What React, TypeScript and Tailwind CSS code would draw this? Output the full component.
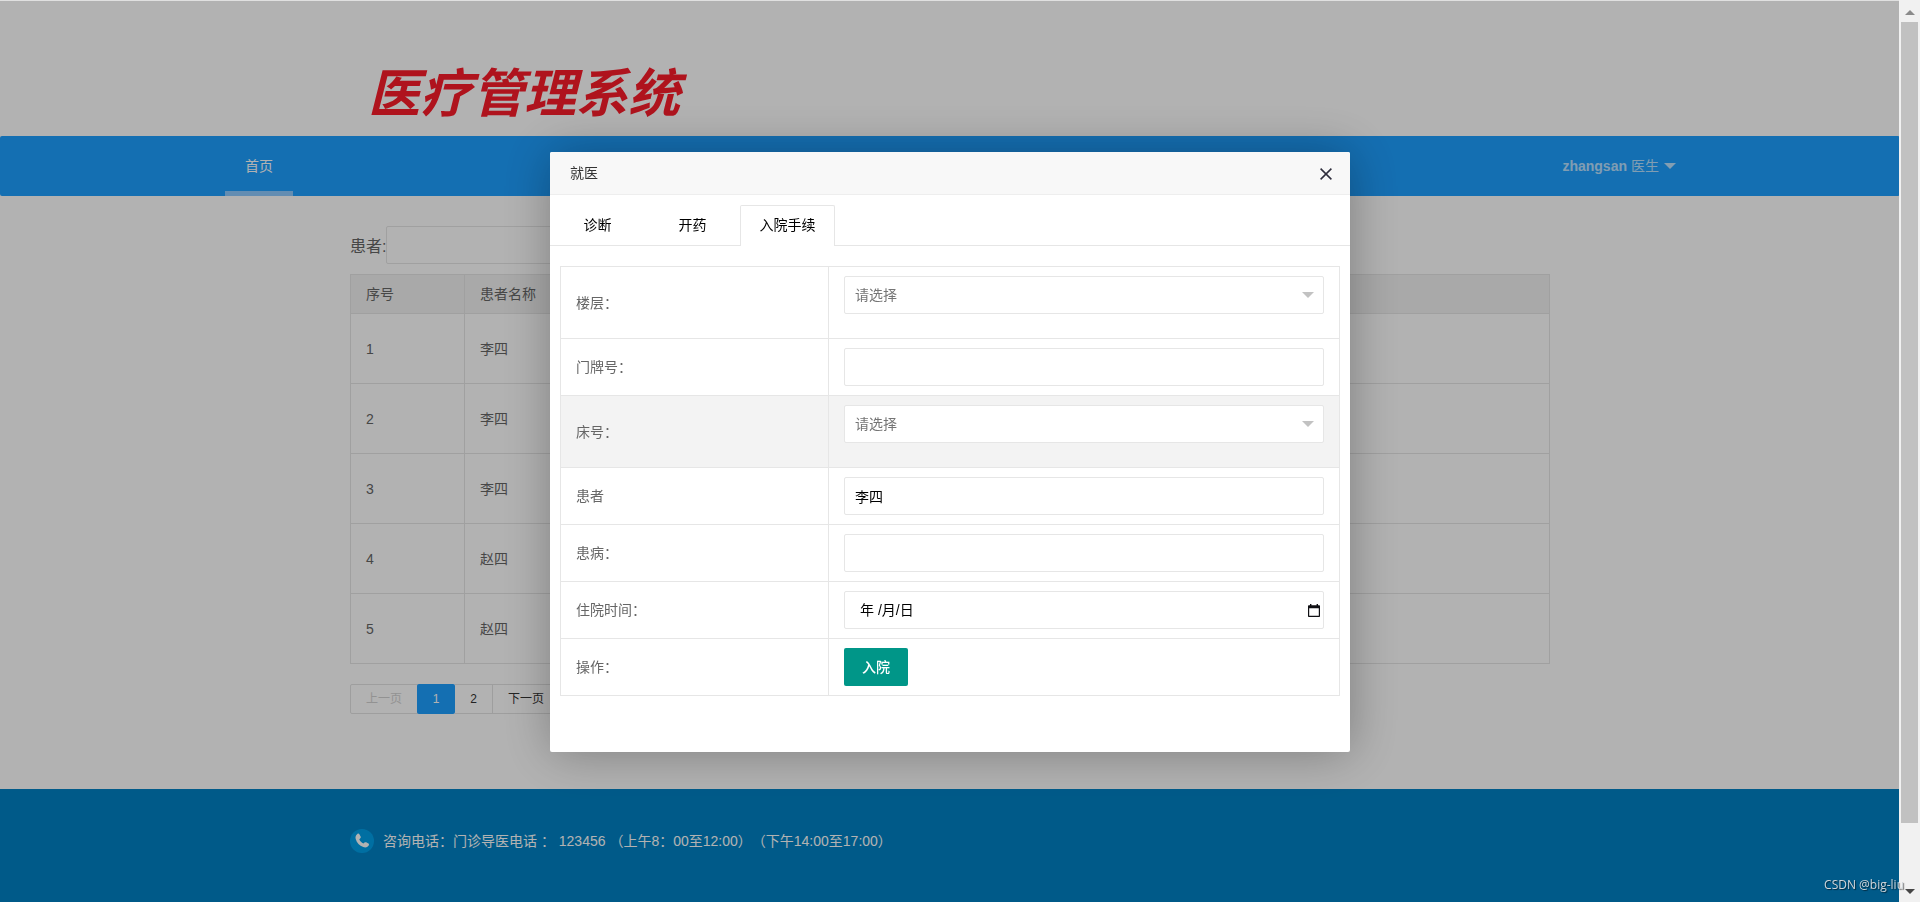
import { useState } from "react";
import type { ReactNode } from "react";

const patients = ["李四", "李四", "李四", "赵四", "赵四"];
const tabs = ["诊断", "开药", "入院手续"];

const fieldClass =
  "block h-[38px] w-full rounded-xs border border-[#e6e6e6] bg-white px-2.5 text-sm outline-none";

function SelectField({ id }: { id: string }) {
  return (
    <div className="relative mb-[15px]">
      <select id={id} className={`${fieldClass} appearance-none text-[#757575]`}>
        <option>请选择</option>
      </select>
      <span className="pointer-events-none absolute top-4 right-2.5 border-x-[6px] border-t-[6px] border-x-transparent border-t-[#c2c2c2]" />
    </div>
  );
}

function FormRow({
  label,
  htmlFor,
  active,
  children,
}: {
  label: string;
  htmlFor: string;
  active?: boolean;
  children: ReactNode;
}) {
  return (
    <tr className={active ? "bg-[#f3f3f3]" : "bg-white"}>
      <th scope="row" className="border border-[#e6e6e6] px-[15px] py-[9px] text-left font-normal">
        <label htmlFor={htmlFor}>{label}</label>
      </th>
      <td className="border border-[#e6e6e6] px-[15px] py-[9px]">{children}</td>
    </tr>
  );
}

function Dialog() {
  const [tab, setTab] = useState(2);
  return (
    <div
      role="dialog"
      aria-labelledby="dialog-title"
      className="min-h-[600px] w-[800px] rounded-xs bg-white shadow-[1px_1px_50px_rgba(0,0,0,0.3)]"
    >
      <div className="flex h-[43px] items-center justify-between rounded-t-xs border-b border-[#eeeeee] bg-[#f8f8f8] pr-[18px] pl-5">
        <h2 id="dialog-title" className="text-sm text-[#333333]">
          就医
        </h2>
        <button type="button" aria-label="关闭" className="pt-0.5">
          <svg viewBox="0 0 12 12" className="size-3" fill="none" stroke="#2e2d3c" strokeWidth="1.5">
            <path d="M0.6 0.6 11.4 11.4M11.4 0.6 0.6 11.4" />
          </svg>
        </button>
      </div>
      <div className="flex h-[51px] border-b border-[#e6e6e6] pt-2.5">
        {tabs.map((name, i) => (
          <button
            key={name}
            type="button"
            onClick={() => setTab(i)}
            className={
              i === tab
                ? "h-[41px] w-[95px] rounded-t-xs border border-b-0 border-[#e6e6e6] bg-white pb-0.5 text-sm text-black"
                : "h-10 w-[95px] text-sm text-black"
            }
          >
            {name}
          </button>
        ))}
      </div>
      <form className="px-2.5 pt-5" onSubmit={(e) => e.preventDefault()}>
        <table className="w-full table-fixed border-collapse text-sm text-[#666666]">
          <colgroup>
            <col className="w-[268px]" />
            <col />
          </colgroup>
          <tbody>
            <FormRow label="楼层：" htmlFor="floor">
              <SelectField id="floor" />
            </FormRow>
            <FormRow label="门牌号：" htmlFor="room">
              <input id="room" type="text" className={`${fieldClass} text-black`} />
            </FormRow>
            <FormRow label="床号：" htmlFor="bed" active>
              <SelectField id="bed" />
            </FormRow>
            <FormRow label="患者" htmlFor="patient">
              <input id="patient" type="text" defaultValue="李四" className={`${fieldClass} text-black`} />
            </FormRow>
            <FormRow label="患病：" htmlFor="illness">
              <input id="illness" type="text" className={`${fieldClass} text-black`} />
            </FormRow>
            <FormRow label="住院时间：" htmlFor="date">
              <div className="flex h-[38px] items-center rounded-xs border border-[#e6e6e6] bg-white pr-[3px] pl-[15px]">
                <input
                  id="date"
                  type="text"
                  placeholder="年 /月/日"
                  className="min-w-0 flex-1 text-sm text-black outline-none placeholder:text-black"
                />
                <button type="button" aria-label="选择日期">
                  <svg viewBox="0 0 12 13" className="h-[13px] w-3">
                    <path
                      fill="#101014"
                      fillRule="evenodd"
                      d="M2 0h1.4v1.2h5.2V0H10v1.2h1.2a.8.8 0 0 1 .8.8v10.2a.8.8 0 0 1-.8.8H.8a.8.8 0 0 1-.8-.8V2a.8.8 0 0 1 .8-.8H2zM1.2 4.2v7.6h9.6V4.2z"
                    />
                  </svg>
                </button>
              </div>
            </FormRow>
            <FormRow label="操作：" htmlFor="submit">
              <button
                id="submit"
                type="submit"
                className="block h-[38px] rounded-xs bg-[#009688] px-[18px] text-sm font-medium text-white"
              >
                入院
              </button>
            </FormRow>
          </tbody>
        </table>
      </form>
    </div>
  );
}

export default function App() {
  return (
    <div className='flex min-h-screen bg-white pr-5 font-["Liberation_Sans","Noto_Sans_CJK_SC",sans-serif] text-sm text-[#666666]'>
      <div className="flex min-w-0 flex-1 flex-col border-t border-[#e0e0e0]">
        <header className="mx-auto flex h-[135px] w-[1200px] items-end pb-[15px] pl-[18px]">
          <h1 className="text-[52px] leading-[54px] font-bold text-[#fb1c2a] italic">医疗管理系统</h1>
        </header>

        <nav className="flex h-[60px] items-stretch justify-between rounded-xs bg-[#1e9fff] pr-[224px] pl-[225px]">
          <a href="#home" className="flex items-center border-b-[5px] border-[#8ecaff] px-5 pt-[5px] text-white">
            首页
          </a>
          <a href="#account" className="flex items-center gap-1 text-white/70">
            <b>zhangsan</b>
            <span>医生</span>
            <span className="ml-px border-x-[6px] border-t-[6px] border-x-transparent border-t-white/70" />
          </a>
        </nav>

        <main className="mx-auto w-[1200px] pt-[30px]">
          <div className="flex items-center">
            <label htmlFor="search" className="w-9 pt-1 text-base whitespace-nowrap">
              患者:
            </label>
            <input id="search" type="text" className="h-[38px] w-[300px] rounded-xs border border-[#e6e6e6] px-2.5" />
          </div>
          <table className="mt-2.5 w-full table-fixed border-collapse">
            <colgroup>
              <col className="w-[114px]" />
              <col />
            </colgroup>
            <thead>
              <tr className="h-[39px] bg-[#f2f2f2]">
                <th className="border border-[#e6e6e6] px-[15px] text-left font-normal">序号</th>
                <th className="border border-[#e6e6e6] px-[15px] text-left font-normal">患者名称</th>
              </tr>
            </thead>
            <tbody>
              {patients.map((name, i) => (
                <tr key={i} className="h-[70px]">
                  <td className="border border-[#e6e6e6] px-[15px]">{i + 1}</td>
                  <td className="border border-[#e6e6e6] px-[15px]">{name}</td>
                </tr>
              ))}
            </tbody>
          </table>
          <div className="mt-5 mb-[75px] flex h-[30px] text-xs text-[#333333]">
            <button type="button" className="rounded-l-xs border border-[#e2e2e2] px-[15px] text-[#d2d2d2]">
              上一页
            </button>
            <button type="button" className="-ml-px w-[38px] rounded-xs bg-[#1e9fff] text-white">
              1
            </button>
            <button type="button" className="w-[38px] border border-l-0 border-[#e2e2e2]">
              2
            </button>
            <button type="button" className="rounded-r-xs border border-l-0 border-[#e2e2e2] px-[15px]">
              下一页
            </button>
          </div>
        </main>

        <footer className="flex-1 bg-[#0082c5] text-white">
          <div className="mx-auto flex w-[1200px] items-center gap-[9px] py-10">
            <svg viewBox="0 0 24 24" className="size-6">
              <circle cx="12" cy="12" r="12" fill="#00a0e9" />
              <path
                fill="#ffffff"
                d="M7.4 4.900c.7-.6 1.600-.4 2 .4l1.200 2.300c.4.700.2 1.300-.3 1.700l-1 .9c.8 2 2.200 3.500 4.200 4.400l1-1c.5-.5 1.100-.6 1.700-.3l2.200 1.300c.7.400.8 1.200.3 1.900-1.400 1.800-3.200 2.400-5.400 1.500-3.900-1.600-6.500-4.300-7.600-8.100-.6-2.100.1-3.700 1.700-5z"
              />
            </svg>
            <p className="[text-spacing-trim:space-all]">
              咨询电话：门诊导医电话 ：&nbsp;123456 （上午8：00至12:00）（下午14:00至17:00）
            </p>
          </div>
        </footer>
      </div>

      <div className="fixed inset-y-0 top-px right-5 left-0 flex items-center justify-center bg-black/30 pt-px">
        <Dialog />
      </div>

      <div
        aria-hidden="true"
        className="fixed inset-y-0 right-0 z-10 flex w-[21px] flex-col items-center justify-between bg-[#f1f1f1] pt-2.5 pb-2"
      >
        <span className="border-x-[5px] border-b-[5px] border-x-transparent border-b-[#8b8b8b]" />
        <span className="mt-[7px] mb-[66px] w-[17px] flex-1 bg-[#c1c1c1]" />
        <span className="border-x-[5px] border-t-[5px] border-x-transparent border-t-[#454545]" />
      </div>

      <p className='fixed right-4 bottom-2 z-20 font-["Open_Sans",sans-serif] text-[12px] leading-[18px] text-[#d0d5d9] [text-shadow:1px_1px_1px_rgba(0,0,0,0.55)]'>
        CSDN @big-liu
      </p>
    </div>
  );
}
